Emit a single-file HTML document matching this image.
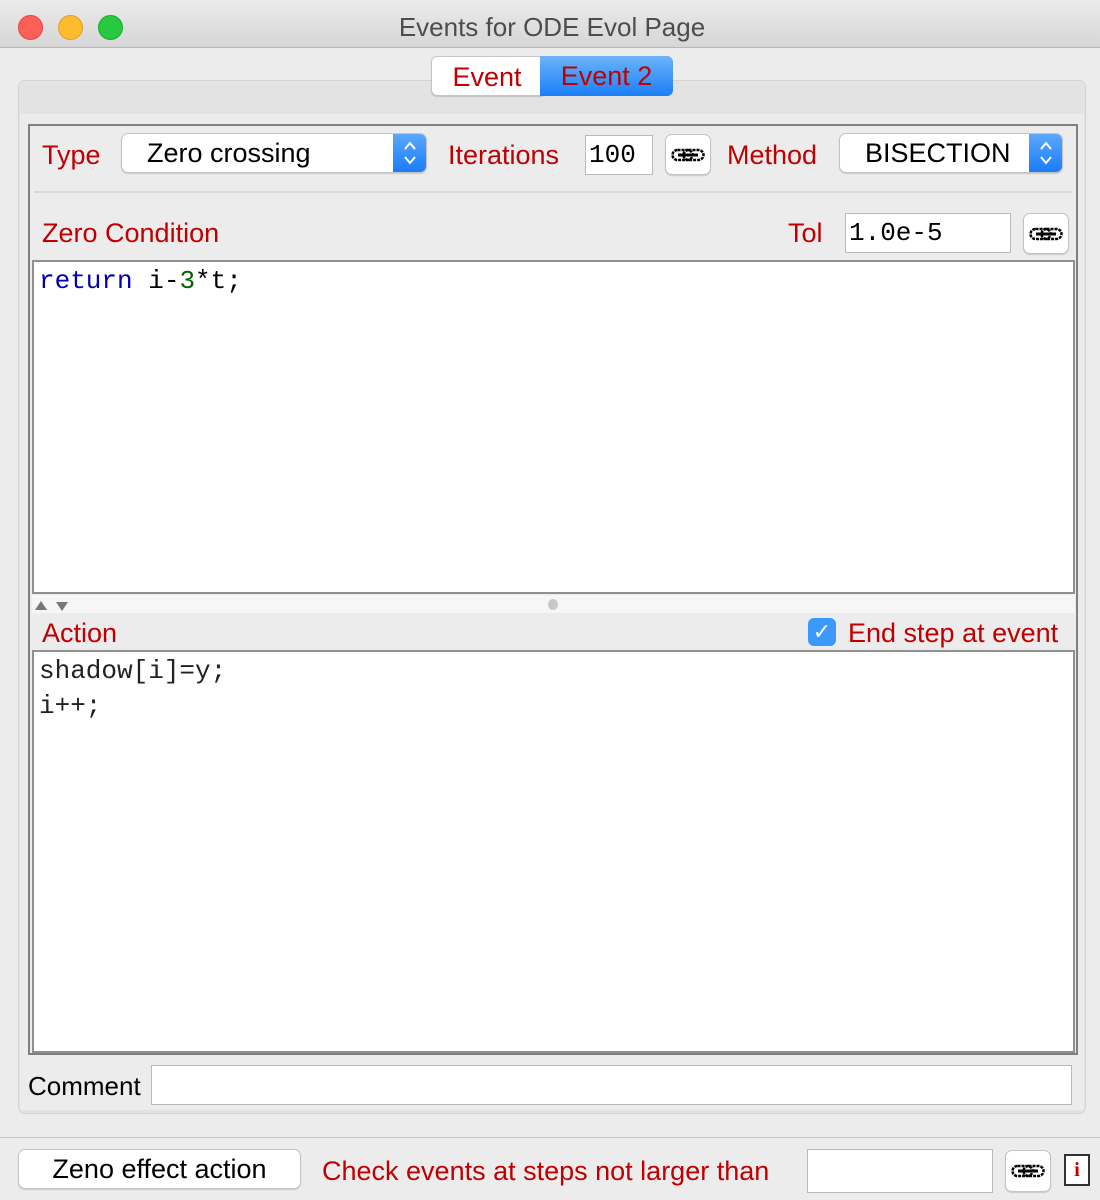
<!DOCTYPE html>
<html><head><style>
*{margin:0;padding:0;box-sizing:border-box}
body{width:1100px;height:1200px;background:#ececec;font-family:"Liberation Sans",sans-serif;position:relative;overflow:hidden}
.a{position:absolute}
.r{color:#c00000;font-size:27px;line-height:30px;white-space:nowrap}
.mono{font-family:"Liberation Mono",monospace;font-size:26px}
.btn{background:#fff;border:1px solid #c4c4c4;border-radius:7px;box-shadow:0 1px 1px rgba(0,0,0,.15)}
.inp{background:#fff;border:1px solid #b9b9b9}
.link{display:flex;align-items:center;justify-content:center}
.sp{position:absolute;right:0;top:0;bottom:0;width:33px;background:linear-gradient(#5aa8ff,#1a7cf5);border-radius:0 6px 6px 0;display:flex;align-items:center;justify-content:center}
</style></head><body>
<div class="a" style="left:0;top:0;width:1100px;height:48px;background:linear-gradient(#ebebeb,#d6d6d6);border-bottom:1px solid #b8b8b8"></div>
<div class="a" style="left:18px;top:15px;width:25px;height:25px;border-radius:50%;background:#fc5f57;border:1px solid #df4744"></div>
<div class="a" style="left:58px;top:15px;width:25px;height:25px;border-radius:50%;background:#fdbc2e;border:1px solid #de9f25"></div>
<div class="a" style="left:98px;top:15px;width:25px;height:25px;border-radius:50%;background:#28c840;border:1px solid #1aab29"></div>
<div class="a" style="left:0;top:12px;width:1104px;text-align:center;font-size:26px;color:#4d4d4d">Events for ODE Evol Page</div>

<div class="a" style="left:18px;top:80px;width:1068px;height:1034px;background:#e3e3e3;border:1px solid #d3d3d3;border-radius:7px"></div>
<div class="a" style="left:20px;top:114px;width:1064px;height:996px;background:#ececec"></div>
<div class="a btn r" style="left:431px;top:56px;width:112px;height:40px;border-radius:6px 0 0 6px;text-align:center;line-height:40px">Event</div>
<div class="a r" style="left:540px;top:56px;width:133px;height:40px;border-radius:0 6px 6px 0;background:linear-gradient(#6cb3fa,#1a7ff7);text-align:center;line-height:40px">Event 2</div>

<div class="a" style="left:28px;top:124px;width:1050px;height:931px;border:2px solid #808080"></div>
<div class="a r" style="left:42px;top:140px">Type</div>
<div class="a btn" style="left:121px;top:133px;width:306px;height:40px;font-size:27px;line-height:38px;padding-left:25px;color:#000">Zero crossing<div class="sp"><svg width="16" height="28" viewBox="0 0 16 28"><path d="M3 10 8 4 13 10M3 18 8 24 13 18" fill="none" stroke="#fff" stroke-width="2"/></svg></div></div>
<div class="a r" style="left:448px;top:140px">Iterations</div>
<div class="a inp mono" style="left:585px;top:135px;width:68px;height:40px;line-height:38px;padding-left:3px">100</div>
<div class="a btn link" style="left:665px;top:134px;width:46px;height:41px"><svg width="34" height="14" viewBox="0 0 34 14"><rect x="1.5" y="2" width="20" height="10" rx="5" fill="none" stroke="#000" stroke-width="2.5" stroke-dasharray="3 1"/><rect x="12.5" y="2" width="20" height="10" rx="5" fill="none" stroke="#000" stroke-width="2.5" stroke-dasharray="3 1"/><path d="M7 7h20" stroke="#000" stroke-width="3"/></svg></div>
<div class="a r" style="left:727px;top:140px">Method</div>
<div class="a btn" style="left:839px;top:133px;width:224px;height:40px;font-size:27px;line-height:38px;padding-left:25px;color:#000">BISECTION<div class="sp"><svg width="16" height="28" viewBox="0 0 16 28"><path d="M3 10 8 4 13 10M3 18 8 24 13 18" fill="none" stroke="#fff" stroke-width="2"/></svg></div></div>
<div class="a" style="left:34px;top:191px;width:1038px;height:2px;background:#d8d8d8"></div>

<div class="a r" style="left:42px;top:218px">Zero Condition</div>
<div class="a r" style="left:788px;top:218px">Tol</div>
<div class="a inp mono" style="left:845px;top:213px;width:166px;height:40px;line-height:38px;padding-left:3px">1.0e-5</div>
<div class="a btn link" style="left:1023px;top:213px;width:46px;height:41px"><svg width="34" height="14" viewBox="0 0 34 14"><rect x="1.5" y="2" width="20" height="10" rx="5" fill="none" stroke="#000" stroke-width="2.5" stroke-dasharray="3 1"/><rect x="12.5" y="2" width="20" height="10" rx="5" fill="none" stroke="#000" stroke-width="2.5" stroke-dasharray="3 1"/><path d="M7 7h20" stroke="#000" stroke-width="3"/></svg></div>

<div class="a mono" style="left:32px;top:260px;width:1043px;height:334px;background:#fff;border:2px solid #909090;padding:3px 5px;line-height:32px"><span style="color:#0000b0">return</span> i-<span style="color:#006400">3</span>*t;</div>
<div class="a" style="left:32px;top:595px;width:1043px;height:18px;background:#f6f6f6"></div>
<div class="a" style="left:34px;top:598px"><svg width="36" height="12"><path d="M1 11 7 2 13 11Z" fill="#777"/><path d="M22 3 34 3 28 12Z" fill="#777"/></svg></div>
<div class="a" style="left:548px;top:599px;width:10px;height:11px;border-radius:50%;background:#c8c8c8"></div>

<div class="a r" style="left:42px;top:618px">Action</div>
<div class="a" style="left:808px;top:618px;width:28px;height:28px;border-radius:6px;background:#3b99fc;color:#fff;font-size:22px;text-align:center;line-height:28px">&#10003;</div>
<div class="a r" style="left:848px;top:618px">End step at event</div>
<div class="a mono" style="left:32px;top:650px;width:1043px;height:403px;background:#fff;border:2px solid #909090;padding:2px 5px;line-height:35px;color:#222">shadow[i]=y;<br>i++;</div>

<div class="a" style="left:28px;top:1071px;font-size:26px;line-height:30px">Comment</div>
<div class="a inp" style="left:151px;top:1065px;width:921px;height:40px"></div>

<div class="a" style="left:0;top:1137px;width:1100px;height:1px;background:#c4c4c4"></div>
<div class="a btn" style="left:18px;top:1149px;width:283px;height:40px;font-size:27px;line-height:38px;text-align:center">Zeno effect action</div>
<div class="a r" style="left:322px;top:1156px">Check events at steps not larger than</div>
<div class="a inp" style="left:807px;top:1149px;width:186px;height:44px"></div>
<div class="a btn link" style="left:1005px;top:1150px;width:46px;height:42px"><svg width="34" height="14" viewBox="0 0 34 14"><rect x="1.5" y="2" width="20" height="10" rx="5" fill="none" stroke="#000" stroke-width="2.5" stroke-dasharray="3 1"/><rect x="12.5" y="2" width="20" height="10" rx="5" fill="none" stroke="#000" stroke-width="2.5" stroke-dasharray="3 1"/><path d="M7 7h20" stroke="#000" stroke-width="3"/></svg></div>
<div class="a" style="left:1064px;top:1154px;width:26px;height:32px;border:2px solid #333;background:#fff;color:#c00000;font-weight:bold;font-size:20px;text-align:center;line-height:28px;font-family:'Liberation Serif',serif">i</div>
</body></html>
